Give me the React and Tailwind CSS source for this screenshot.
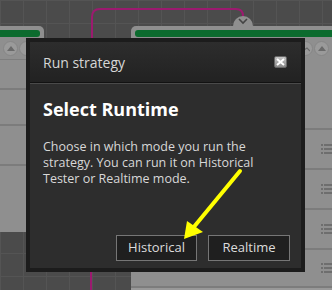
import React from "react";

const ListIcon = () => (
  <svg width="12" height="10" viewBox="0 0 12 10" className="text-[#6e6e6e]">
    <rect x="0" y="0" width="2" height="2" fill="currentColor" />
    <rect x="3" y="0" width="9" height="2" fill="currentColor" />
    <rect x="0" y="4" width="2" height="2" fill="currentColor" />
    <rect x="3" y="4" width="9" height="2" fill="currentColor" />
    <rect x="0" y="8" width="2" height="2" fill="currentColor" />
    <rect x="3" y="8" width="9" height="2" fill="currentColor" />
  </svg>
);

const RoundBtn = ({ children }) => (
  <div className="w-[15px] h-[15px] rounded-full bg-[#9a9a9a] border border-[#868686] flex items-center justify-center">
    {children}
  </div>
);

const Up = () => (
  <svg width="8" height="5" viewBox="0 0 8 5">
    <path d="M0 5 L4 0 L8 5 Z" fill="#6a6a6a" />
  </svg>
);

// LEFT NODE (mostly hidden behind the dialog)
const LeftNode = () => (
  <div className="absolute left-0 top-[26px] w-[44px] h-[206px] bg-[#8f8f8f] rounded-tr-[5px] flex flex-col">
    <div className="h-[4px]" />
    <div className="h-[7px] bg-[#0c6b2e] mr-[4px] rounded-r-[3px]" />
    <div className="flex gap-[1px] px-[3px] pt-[4px] pb-[3px] border-b border-[#7e7e7e]">
      <RoundBtn>
        <Up />
      </RoundBtn>
      <RoundBtn />
    </div>
    <div className="h-[30px] border-b-2 border-[#7c7c7c]" />
    <div className="h-[36px] border-b-2 border-[#7c7c7c]" />
    <div className="h-[40px] border-b-2 border-[#7c7c7c]" />
    <div className="flex-1" />
  </div>
);

// RIGHT NODE (mostly hidden behind the dialog)
const RightNode = () => (
  <div className="absolute left-[131px] top-[26px] w-[210px] h-[280px] bg-[#8f8f8f] rounded-tl-[5px] flex flex-col">
    <div className="h-[4px]" />
    <div className="h-[7px] bg-[#0c6b2e] ml-[4px] rounded-l-[3px]" />
    <div className="flex justify-end gap-[1px] pr-[12px] pt-[4px] h-[30px]">
      <RoundBtn>
        <svg width="9" height="6" viewBox="0 0 9 6">
          <path d="M0 1 L3 4 L6 2 L9 5" stroke="#6a6a6a" strokeWidth="1.2" fill="none" />
        </svg>
      </RoundBtn>
      <RoundBtn>
        <Up />
      </RoundBtn>
    </div>
    <div className="h-[63px] border-b-2 border-[#7c7c7c]" />
    {[0, 1, 2].map((i) => (
      <div key={i} className="h-[40px] border-b-2 border-[#7c7c7c] flex items-center justify-end pr-[8px]">
        <ListIcon />
      </div>
    ))}
    <div className="h-[38px] border-b-2 border-[#7c7c7c] flex items-center justify-end pr-[8px]">
      <ListIcon />
    </div>
    <div className="flex-1 bg-[#999]" />
  </div>
);

// CONNECTOR WIRE
const Wire = () => (
  <svg className="absolute left-0 top-0" width="332" height="290" viewBox="0 0 332 290">
    <path d="M92 40 L92 17 Q92 9 100 9 L236 9 Q243 9 243 16 L243 20" stroke="#9c1a6f" strokeWidth="2" fill="none" />
    <path d="M91 270 L91 290" stroke="#9c1a6f" strokeWidth="2" fill="none" />
    <path d="M233 26 A10 10 0 0 1 253 26 Z" fill="#8f8f8f" />
    <path d="M239 19 L243 23 L247 19" stroke="#444" strokeWidth="1.6" fill="none" />
  </svg>
);

export default function App() {
  return (
    <div
      className="relative w-[332px] h-[290px] overflow-hidden bg-[#4b4b4b] bg-[linear-gradient(to_right,#545454_1px,transparent_1px),linear-gradient(to_bottom,#545454_1px,transparent_1px)] bg-[size:23px_23px]"
      style={{ fontFamily: '"Open Sans", "Noto Sans", sans-serif' }}
    >
      <LeftNode />
      <RightNode />
      <Wire />

      {/* DIALOG */}
      <div className="absolute left-[26px] top-[38px] w-[279px] h-[234px] bg-[#1c1c1c] p-[4px] flex flex-col">
        {/* HEADER */}
        <div className="h-[41px] flex items-center justify-between pl-[13px] pr-[14px] bg-[linear-gradient(to_bottom,#2d2d2d,#222222)] border-b border-[#121212]">
          <span className="text-[14px] text-[#d6d6d6]">Run strategy</span>
          <div className="w-[13px] h-[12px] rounded-[2px] bg-[linear-gradient(to_bottom,#c4c4c4,#8a8a8a)] border border-[#666] flex items-center justify-center">
            <svg width="9" height="8" viewBox="0 0 9 8">
              <path d="M1 1 L8 7 M8 1 L1 7" stroke="#fff" strokeWidth="2" />
            </svg>
          </div>
        </div>
        {/* BODY */}
        <div className="flex-1 bg-[#2d2d2d] border-t border-[#4a4a4a] flex flex-col pl-[13px] pr-[10px]">
          <h2 className="text-[18px] font-bold text-white leading-[24px] mt-[13px]">Select Runtime</h2>
          <p className="text-[12.5px] leading-[16px] text-[#d8d8d8] mt-[18px]">
            Choose in which mode you run the strategy. You can run it on Historical Tester or Realtime mode.
          </p>
          <div className="flex-1" />
          <div className="flex justify-end gap-[11px] pr-[1px] mb-[7px]">
            <button className="w-[81px] h-[26px] border border-[#767676] bg-[#1f1f1f] text-[13px] text-[#dcdcdc]">
              Historical
            </button>
            <button className="w-[82px] h-[26px] border border-[#767676] bg-[#1f1f1f] text-[13px] text-[#dcdcdc]">
              Realtime
            </button>
          </div>
        </div>
      </div>

      {/* YELLOW ARROW */}
      <svg className="absolute left-0 top-0" width="332" height="290" viewBox="0 0 332 290">
        <path d="M240 171 L193 228" stroke="#ffff00" strokeWidth="4" strokeLinecap="round" />
        <path d="M184 239 L187 221 L203 232 Z" fill="#ffff00" />
      </svg>
    </div>
  );
}
